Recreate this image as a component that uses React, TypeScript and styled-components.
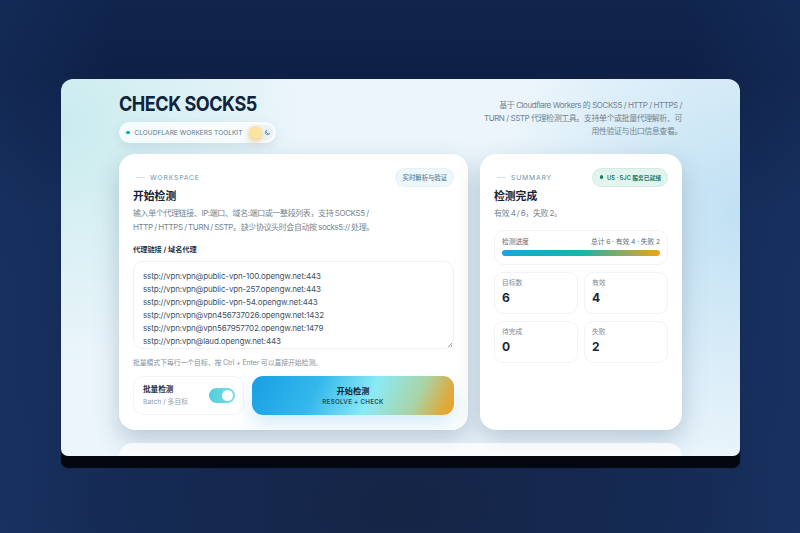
import { styled, createGlobalStyle } from 'styled-components';

const FONT = `Inter, "Noto Sans CJK SC", "Noto Sans", sans-serif`;

const GlobalStyle = createGlobalStyle`
    html, body {
        margin: 0;
        padding: 0;
        height: 533px;
        overflow: hidden;
        background: #14284f;
        font-family: ${FONT};
    }
    * { box-sizing: border-box; }
`;

const Page = styled.div`
    width: 800px;
    height: 533px;
    padding-top: 79px;
    display: flex;
    justify-content: center;
    align-items: flex-start;
    overflow: hidden;
    background:
        radial-gradient(ellipse 380px 260px at 50% 95%, rgba(20, 36, 68, 0.95), rgba(20, 36, 68, 0) 100%),
        linear-gradient(90deg, rgba(26, 54, 104, 0.4) 0%, rgba(26, 54, 104, 0) 14%, rgba(26, 54, 104, 0) 86%, rgba(26, 54, 104, 0.4) 100%),
        linear-gradient(180deg, #10244c 0%, #0e2046 14%, #152b57 40%, #162d5a 100%);
`;

const Window = styled.div`
    width: 679px;
    height: 377px;
    margin-left: 1px;
    padding: 0 58px;
    border-radius: 12px 12px 7px 7px;
    overflow: hidden;
    background:
        radial-gradient(ellipse 240px 240px at 0% 12%, rgba(196, 234, 236, 0.85), rgba(196, 234, 236, 0) 100%),
        radial-gradient(ellipse 240px 260px at 100% 35%, rgba(190, 224, 243, 0.95), rgba(190, 224, 243, 0) 100%),
        #ebf5fb;
    box-shadow: 0 12px 1px #03070f;
`;

const Header = styled.header`
    height: 75px;
    padding-top: 13px;
    display: flex;
    justify-content: space-between;
    align-items: flex-start;
`;

const Brand = styled.div`
    display: flex;
    flex-direction: column;
    align-items: flex-start;
    gap: 6px;
`;

const Title = styled.h1`
    margin: 0;
    font-size: 20.5px;
    line-height: 24px;
    font-weight: 700;
    letter-spacing: -0.55px;
    color: #10233f;
    transform: scaleX(0.88);
    transform-origin: left center;
`;

const ToolkitPill = styled.div`
    height: 21px;
    padding: 0 2px 0 7px;
    display: flex;
    align-items: center;
    gap: 5px;
    border-radius: 11px;
    background: rgba(255, 255, 255, 0.75);
    box-shadow: 0 3px 10px rgba(60, 100, 130, 0.12);
    font-size: 6.5px;
    letter-spacing: 0.05px;
    color: #5b7a8b;
`;

const Dot = styled.span<{ $color: string }>`
    width: 3.5px;
    height: 3.5px;
    border-radius: 50%;
    background: ${p => p.$color};
    flex: none;
`;

const ThemeToggle = styled.span`
    width: 27px;
    height: 15px;
    padding: 0 3px 0 2px;
    display: flex;
    align-items: center;
    justify-content: space-between;
    border-radius: 8px;
    background: rgba(235, 243, 247, 0.9);
`;

const ToggleKnob = styled.span`
    width: 13px;
    height: 13px;
    border-radius: 50%;
    background: #fbe3a0;
    box-shadow: 0 3px 7px rgba(225, 170, 60, 0.55);
`;

const Intro = styled.p`
    margin: 7px 0 0;
    width: 200px;
    text-align: right;
    font-size: 8px;
    line-height: 13px;
    letter-spacing: -0.45px;
    color: #73838f;
`;

const Grid = styled.div`
    display: grid;
    grid-template-columns: 349px 202px;
    gap: 13px 12px;
`;

const Card = styled.section`
    height: 276px;
    padding: 13px 14px;
    border-radius: 16px;
    background: #fff;
    box-shadow: 0 10px 24px rgba(70, 100, 130, 0.3);
    overflow: hidden;
`;

const LowerCard = styled.section`
    grid-column: 1 / span 2;
    height: 40px;
    border-radius: 14px;
    background: rgba(255, 255, 255, 0.75);
`;

const CardTop = styled.div`
    height: 20px;
    display: flex;
    justify-content: space-between;
    align-items: center;
`;

const Eyebrow = styled.div`
    display: flex;
    align-items: center;
    gap: 5px;
    padding-left: 3px;
    font-size: 6.8px;
    letter-spacing: 0.8px;
    color: #6f93a8;

    &::before {
        content: '';
        width: 9px;
        height: 1px;
        background: #cfe0e8;
    }
`;

const Badge = styled.span<{ $tone?: 'blue' | 'green' }>`
    height: 19px;
    padding: 0 6px 0 7px;
    display: inline-flex;
    align-items: center;
    gap: 4px;
    border-radius: 10px;
    font-size: ${p => (p.$tone === 'green' ? '5.8px' : '6.4px')};
    font-weight: ${p => (p.$tone === 'green' ? 600 : 500)};
    letter-spacing: -0.05px;
    color: ${p => (p.$tone === 'green' ? '#1c7a68' : '#5e8296')};
    background: ${p => (p.$tone === 'green' ? '#e1f5ee' : '#eef7fb')};
    border: 1px solid ${p => (p.$tone === 'green' ? '#d0ece2' : '#e6f1f6')};
`;

const CardTitle = styled.h2`
    margin: 2px 0 0;
    font-size: 10.8px;
    line-height: 16px;
    font-weight: 700;
    color: #14233a;
`;

const CardText = styled.p`
    margin: 2px 0 0;
    max-width: 246px;
    font-size: 8px;
    line-height: 13.5px;
    letter-spacing: -0.4px;
    word-spacing: -0.4px;
    color: #79868f;
`;

const FieldLabel = styled.div`
    margin-top: 11px;
    font-size: 7.2px;
    line-height: 10px;
    font-weight: 700;
    color: #24344a;
`;

const AddressWrap = styled.div`
    position: relative;
    margin-top: 6px;

    &::after {
        content: '';
        position: absolute;
        right: 2px;
        bottom: 2px;
        width: 5px;
        height: 5px;
        background: linear-gradient(135deg, transparent 55%, #9aa7b0 55%, #9aa7b0 68%, transparent 68%, transparent 80%, #9aa7b0 80%);
    }
`;

const AddressBox = styled.textarea`
    display: block;
    width: 321px;
    height: 88px;
    padding: 7.5px 9px 0;
    border: 1px solid #edf2f5;
    border-radius: 10px;
    background: #fff;
    outline: none;
    overflow: hidden;
    resize: none;
    font-family: ${FONT};
    font-size: 8px;
    line-height: 13.1px;
    letter-spacing: -0.14px;
    color: #43525f;
`;

const Hint = styled.div`
    margin-top: 8px;
    font-size: 6.9px;
    line-height: 11px;
    letter-spacing: -0.1px;
    color: #85929b;
`;

const ActionRow = styled.div`
    margin-top: 8px;
    display: grid;
    grid-template-columns: 111px 202px;
    gap: 8px;
    height: 39px;
`;

const BatchBox = styled.div`
    padding: 0 8px 0 9px;
    display: flex;
    justify-content: space-between;
    align-items: center;
    border: 1px solid #f0f4f7;
    border-radius: 10px;
`;

const BatchName = styled.div`
    font-size: 7.6px;
    line-height: 12px;
    font-weight: 700;
    color: #24344a;
`;

const BatchSub = styled.div`
    font-size: 6.8px;
    line-height: 11px;
    color: #93a0a9;
`;

const Switch = styled.span`
    width: 26px;
    height: 15px;
    padding: 2px;
    display: flex;
    justify-content: flex-end;
    border-radius: 8px;
    background: linear-gradient(90deg, #4fcfdc, #7ce0dc);

    &::after {
        content: '';
        width: 11px;
        height: 11px;
        border-radius: 50%;
        background: #fff;
    }
`;

const StartButton = styled.button`
    padding: 0;
    border: 0;
    border-radius: 11px;
    display: flex;
    flex-direction: column;
    align-items: center;
    justify-content: center;
    font-family: ${FONT};
    color: #14233a;
    background: linear-gradient(115deg, #179fe3 0%, #34b8ec 32%, #8aeaf6 58%, #aad3a4 80%, #dcab42 93%, #eba21c 100%);
    box-shadow: 0 10px 20px rgba(70, 170, 225, 0.22);
`;

const StartLabel = styled.span`
    font-size: 8.2px;
    line-height: 11px;
    font-weight: 700;
`;

const StartSub = styled.span`
    font-size: 6.2px;
    line-height: 9px;
    font-weight: 600;
    letter-spacing: 0.3px;
    color: #24505f;
`;

const ProgressBox = styled.div`
    margin-top: 9.5px;
    height: 35px;
    padding: 6px 7px 0;
    border: 1px solid #f0f4f7;
    border-radius: 10px;
`;

const ProgressHead = styled.div`
    display: flex;
    justify-content: space-between;
    font-size: 6.8px;
    line-height: 10px;
    letter-spacing: -0.1px;
    color: #5d6c78;
`;

const ProgressTrack = styled.div`
    margin-top: 3px;
    height: 5.5px;
    border-radius: 3px;
    background: linear-gradient(90deg, #19a4e3 0%, #17b4a8 50%, #f0a31c 100%);
`;

const Stats = styled.div`
    margin-top: 7px;
    display: grid;
    grid-template-columns: 1fr 1fr;
    gap: 7px 6px;
`;

const Stat = styled.div`
    height: 42px;
    padding: 5px 7px;
    border: 1px solid #f0f4f7;
    border-radius: 9px;
`;

const StatLabel = styled.div`
    font-size: 6.8px;
    line-height: 10px;
    color: #7d8a94;
`;

const StatValue = styled.div`
    margin-top: 2px;
    font-size: 12px;
    line-height: 16px;
    font-weight: 700;
    color: #18263b;
`;

const LINKS = `sstp://vpn:vpn@public-vpn-100.opengw.net:443
sstp://vpn:vpn@public-vpn-257.opengw.net:443
sstp://vpn:vpn@public-vpn-54.opengw.net:443
sstp://vpn:vpn@vpn456737026.opengw.net:1432
sstp://vpn:vpn@vpn567957702.opengw.net:1479
sstp://vpn:vpn@laud.opengw.net:443`;

const STATS = [
    ['目标数', '6'],
    ['有效', '4'],
    ['待完成', '0'],
    ['失败', '2'],
];

export default function App() {
    return (
        <Page>
            <GlobalStyle />
            <Window>
                <Header>
                    <Brand>
                        <Title>CHECK SOCKS5</Title>
                        <ToolkitPill>
                            <Dot $color="#14a9a6" />
                            CLOUDFLARE WORKERS TOOLKIT
                            <ThemeToggle>
                                <ToggleKnob />
                                <svg width="7" height="7" viewBox="0 0 24 24" fill="none" stroke="#4f93b0" strokeWidth="3">
                                    <path d="M20 14A8 8 0 1 1 10 4a6.5 6.5 0 0 0 10 10z" />
                                </svg>
                            </ThemeToggle>
                        </ToolkitPill>
                    </Brand>
                    <Intro>
                        基于 Cloudflare Workers 的 SOCKS5 / HTTP / HTTPS / TURN / SSTP 代理检测工具。支持单个或批量代理解析、可用性验证与出口信息查看。
                    </Intro>
                </Header>
                <Grid>
                    <Card>
                        <CardTop>
                            <Eyebrow>WORKSPACE</Eyebrow>
                            <Badge>实时解析与验证</Badge>
                        </CardTop>
                        <CardTitle>开始检测</CardTitle>
                        <CardText>
                            输入单个代理链接、IP:端口、域名:端口或一整段列表，支持 SOCKS5 / HTTP / HTTPS / TURN / SSTP。缺少协议头时会自动按 socks5:// 处理。
                        </CardText>
                        <FieldLabel>代理链接 / 域名代理</FieldLabel>
                        <AddressWrap>
                            <AddressBox readOnly value={LINKS} />
                        </AddressWrap>
                        <Hint>批量模式下每行一个目标，按 Ctrl + Enter 可以直接开始检测。</Hint>
                        <ActionRow>
                            <BatchBox>
                                <div>
                                    <BatchName>批量检测</BatchName>
                                    <BatchSub>Batch / 多目标</BatchSub>
                                </div>
                                <Switch />
                            </BatchBox>
                            <StartButton>
                                <StartLabel>开始检测</StartLabel>
                                <StartSub>RESOLVE + CHECK</StartSub>
                            </StartButton>
                        </ActionRow>
                    </Card>
                    <Card>
                        <CardTop>
                            <Eyebrow>SUMMARY</Eyebrow>
                            <Badge $tone="green">
                                <Dot $color="#1c7a68" />
                                US · SJC 服务已就绪
                            </Badge>
                        </CardTop>
                        <CardTitle>检测完成</CardTitle>
                        <CardText>有效 4 / 6，失败 2。</CardText>
                        <ProgressBox>
                            <ProgressHead>
                                <span>检测进度</span>
                                <span>总计 6 · 有效 4 · 失败 2</span>
                            </ProgressHead>
                            <ProgressTrack />
                        </ProgressBox>
                        <Stats>
                            {STATS.map(([label, value]) => (
                                <Stat key={label}>
                                    <StatLabel>{label}</StatLabel>
                                    <StatValue>{value}</StatValue>
                                </Stat>
                            ))}
                        </Stats>
                    </Card>
                    <LowerCard />
                </Grid>
            </Window>
        </Page>
    );
}
